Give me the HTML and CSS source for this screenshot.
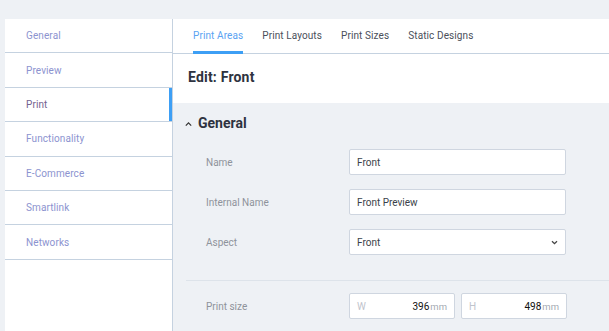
FILE: index.html
```html
<!DOCTYPE html>
<html>
<head>
<meta charset="utf-8">
<link rel="stylesheet" href="styles.css">
</head>
<body>
<div class="page">
  <nav class="sidebar">
    <a class="nav-item">General</a>
    <a class="nav-item">Preview</a>
    <a class="nav-item active">Print</a>
    <a class="nav-item">Functionality</a>
    <a class="nav-item">E-Commerce</a>
    <a class="nav-item">Smartlink</a>
    <a class="nav-item">Networks</a>
  </nav>
  <main class="main">
    <div class="tabs">
      <span class="tab active">Print Areas</span>
      <span class="tab">Print Layouts</span>
      <span class="tab">Print Sizes</span>
      <span class="tab">Static Designs</span>
    </div>
    <div class="edit-head">Edit: Front</div>
    <section class="panel">
      <div class="panel-title">
        <svg class="chev" width="9" height="6" viewBox="0 0 9 6"><path d="M1.8 4.6 L4.5 1.9 L7.2 4.6" fill="none" stroke="#333" stroke-width="1.2"/></svg>
        <span>General</span>
      </div>
      <div class="rows">
        <div class="row">
          <label class="lbl">Name</label>
          <div class="field">Front</div>
        </div>
        <div class="row">
          <label class="lbl">Internal Name</label>
          <div class="field">Front Preview</div>
        </div>
        <div class="row">
          <label class="lbl">Aspect</label>
          <div class="field select">Front
            <svg class="sel-chev" width="7" height="5" viewBox="0 0 7 5"><path d="M1 1.2 L3.5 3.7 L6 1.2" fill="none" stroke="#444" stroke-width="1.3"/></svg>
          </div>
        </div>
      </div>
      <div class="divider"></div>
      <div class="row size-row">
        <label class="lbl">Print size</label>
        <div class="size-fields">
          <div class="field dim"><span class="ph">W</span><span class="val">396<span class="unit">mm</span></span></div>
          <div class="field dim"><span class="ph">H</span><span class="val">498<span class="unit">mm</span></span></div>
        </div>
      </div>
    </section>
  </main>
</div>
</body>
</html>
```

FILE: styles.css
```css
* { box-sizing: border-box; }
html, body { margin: 0; padding: 0; }
body {
  background: #eef1f5;
  font-family: "Roboto", "Liberation Sans", sans-serif;
  width: 609px;
  height: 331px;
  overflow: hidden;
}
.page {
  display: flex;
  padding: 19px 0 0 5px;
  height: 331px;
}
.sidebar {
  width: 168px;
  flex: none;
  background: #fff;
  border-right: 1px solid #c5d2e0;
  display: flex;
  flex-direction: column;
}
.nav-item {
  display: flex;
  align-items: center;
  height: 34.4px;
  padding-left: 21px;
  font-size: 10px;
  color: #8c93cf;
  border-bottom: 1px solid #c5d2e0;
  letter-spacing: 0.1px;
}
.nav-item.active {
  color: #74628e;
  box-shadow: inset -3px 0 0 #3d9ff5;
}
.main {
  flex: 1;
  display: flex;
  flex-direction: column;
  min-width: 0;
}
.tabs {
  background: #fff;
  height: 35px;
  border-bottom: 1px solid #c5d2e0;
  display: flex;
  align-items: stretch;
  padding-left: 20px;
  gap: 19px;
}
.tab {
  font-size: 10px;
  color: #4a4f5a;
  display: flex;
  align-items: center;
  padding-bottom: 2px;
  position: relative;
  letter-spacing: 0.1px;
}
.tab.active {
  color: #5aa2f2;
}
.tab.active::after {
  content: "";
  position: absolute;
  left: 0;
  right: 0;
  bottom: -1px;
  height: 3px;
  background: #3d9ff5;
}
.edit-head {
  background: #fff;
  height: 49px;
  padding-left: 15px;
  display: flex;
  align-items: center;
  font-size: 14px;
  font-weight: 700;
  color: #2e3340;
  padding-bottom: 3px;
  letter-spacing: 0.2px;
}
.panel {
  flex: 1;
  padding-top: 8px;
}
.panel-title {
  display: flex;
  align-items: center;
  height: 24px;
  padding-left: 11px;
  gap: 5px;
  font-size: 14px;
  font-weight: 700;
  color: #2e3340;
}
.chev { margin-top: 1px; }
.rows {
  padding-top: 14px;
  display: flex;
  flex-direction: column;
  gap: 14px;
}
.row {
  display: flex;
  align-items: center;
  padding-left: 33px;
}
.lbl {
  width: 143px;
  flex: none;
  font-size: 10px;
  color: #8e939b;
}
.field {
  width: 217px;
  height: 26px;
  background: #fff;
  border: 1px solid #cfd6e0;
  border-radius: 2px;
  display: flex;
  align-items: center;
  padding-left: 7px;
  font-size: 10px;
  color: #3a3f4a;
}
.field.select {
  justify-content: space-between;
  padding-right: 7px;
}
.sel-chev { margin-top: 1px; }
.divider {
  height: 1px;
  background: #dde3ea;
  margin: 25px 0 0 13px;
}
.size-row {
  padding-top: 12px;
}
.size-fields {
  display: flex;
  gap: 6px;
}
.field.dim {
  width: 106px;
  justify-content: space-between;
  padding-right: 7px;
}
.ph { color: #bfc4cc; }
.val { color: #111; }
.unit { color: #a5aab2; font-size: 9.5px; margin-left: 1px; }
```
